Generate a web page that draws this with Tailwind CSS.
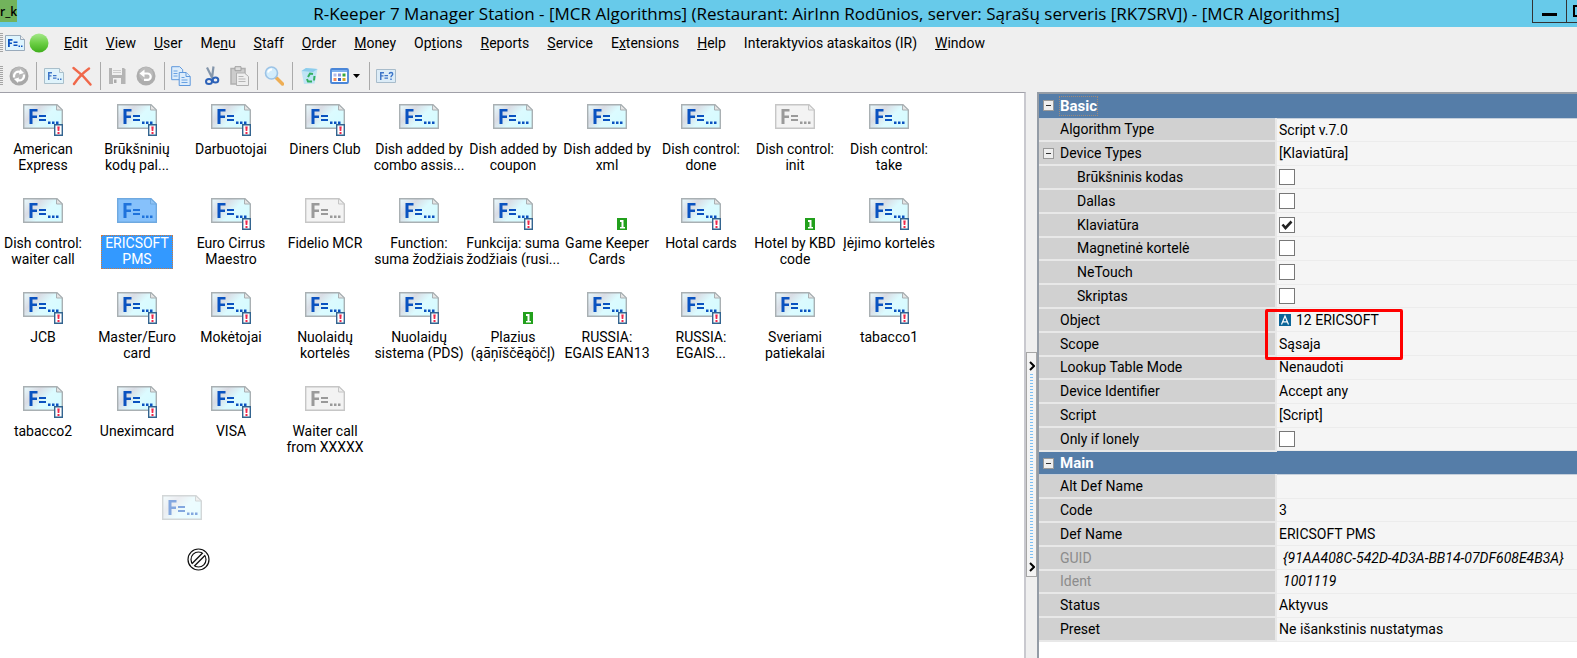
<!DOCTYPE html>
<html lang="en">
<head>
  <meta charset="UTF-8" />
  <meta name="viewport" content="width=device-width, initial-scale=1.0" />
  <title>R-Keeper 7 Manager Station</title>
  <script src="https://cdn.jsdelivr.net/npm/@tailwindcss/browser@4"></script>
</head>
<body class="min-h-screen flex flex-col overflow-x-hidden bg-[#efefef] font-['Roboto',sans-serif] text-sm text-black">

  <!-- Shared symbols -->
  <svg class="absolute size-0">
    <defs>
      <linearGradient id="paper" x1="0" y1="0" x2="1" y2=".6">
        <stop offset="0" stop-color="#e8fbff" />
        <stop offset=".35" stop-color="#d9dce4" />
        <stop offset=".65" stop-color="#dcfbff" />
        <stop offset="1" stop-color="#d6fbff" />
      </linearGradient>
      <linearGradient id="ball" x1="0" y1="0" x2="0" y2="1">
        <stop offset="0" stop-color="#a5e88a" />
        <stop offset=".5" stop-color="#6ccf45" />
        <stop offset="1" stop-color="#3fae1c" />
      </linearGradient>
    </defs>
    <symbol id="formula" viewBox="0 0 40 32">
      <path d="M6.500 5h8v2.500H9.500v4h4.500V14H9.500v6h-3z" />
      <path d="M16 11h7v2h-7zM16 15h7v2h-7zM25 17.500h2.500V20H25zM29 17.500h2.500V20H29zM33 17.500h2.500V20H33z" />
    </symbol>
    <symbol id="doc" viewBox="0 0 40 32">
      <path d="M.7.7H34l5.3 5.3V24.300H.7z" fill="url(#paper)" stroke="#a9b0b3" stroke-width="1.400" />
      <path d="M33.500 .7V6h5.800z" fill="#e4e4e4" stroke="#a9b0b3" />
      <use href="#formula" width="40" height="32" fill="#0a52c0" />
    </symbol>
    <symbol id="doc-gray" viewBox="0 0 40 32">
      <path d="M.7.7H34l5.3 5.3V24.300H.7z" fill="#f3f3f3" stroke="#c6c6c6" stroke-width="1.400" />
      <path d="M33.500 .7V6h5.800z" fill="#eee" stroke="#c6c6c6" />
      <use href="#formula" width="40" height="32" fill="#9a9a9a" />
    </symbol>
    <symbol id="doc-selected" viewBox="0 0 40 32">
      <path d="M.7.7H34l5.3 5.3V24.300H.7z" fill="#86c1fb" stroke="#6fa9e0" stroke-width="1.400" />
      <path d="M33.500 .7V6h5.800z" fill="#8fc3f5" stroke="#6fa9e0" />
      <use href="#formula" width="40" height="32" fill="#1f73dc" />
    </symbol>
    <symbol id="mark" viewBox="0 0 40 32">
      <path d="M31.700 20.700h7.600v10.600h-7.600z" fill="#fff" stroke="#33648f" stroke-width="1.400" />
      <path d="M34.300 22.500h2.400l-.4 4.500h-1.600zM34.500 28h2v2h-2z" fill="#f0284a" />
    </symbol>
    <symbol id="one" viewBox="0 0 40 32">
      <path d="M30 20h10v12H30z" fill="#22a01c" />
      <path d="M33 22h3.500v7H38v1.500h-5V29h1.500v-5H33z" fill="#fff" />
    </symbol>
  </svg>

  <!-- Title bar -->
  <header class="relative flex h-[27px] shrink-0 justify-center bg-[#67caea] pl-[76px]">
    <span class="absolute left-0 top-0 h-[22px] w-[17px] bg-[#72b35c] font-['Open_Sans',sans-serif] text-xs font-semibold leading-6">r_k</span>
    <h1 class="whitespace-nowrap font-['Open_Sans',sans-serif] text-[17px] leading-7">R-Keeper 7 Manager Station - [MCR Algorithms] (Restaurant: AirInn Rodūnios, server: Sąrašų serveris [RK7SRV]) - [MCR Algorithms]</h1>
    <div class="absolute right-0 top-0 flex">
      <button aria-label="Minimize" class="flex h-[23px] w-[35px] items-end justify-center border-x border-b border-[#333] pb-[6px]"><span class="h-[3px] w-[15px] bg-black"></span></button>
      <button aria-label="Restore" class="flex h-[23px] w-[10px] items-center justify-end border-b border-[#333]"><span class="h-3 w-1 border-y-2 border-l-2 border-black"></span></button>
    </div>
  </header>

  <!-- Menu -->
  <nav class="flex h-8 shrink-0 items-center">
    <span class="h-5 w-[3px] bg-[repeating-linear-gradient(#a5a5a5_0_1px,#efefef_1px_2px)]"></span>
    <svg class="ml-[2px] h-4 w-5" viewBox="0 0 20 16"><path d="M.5.5h15l4 4v11H.5z" fill="#def4fd" stroke="#9ab" /><path d="M15.500 .5v4h4" fill="#eee" stroke="#9ab" /><path d="M3 4h4.500v1.800H4.800v1.700H7v1.500H4.800V12H3zM8.500 6.500h4V8h-4zM8.500 9.500h4V11h-4zM13.500 10.500H15V12h-1.500zM16 10.500h1.500V12H16z" fill="#0a52c0" /></svg>
    <svg class="ml-1 size-5" viewBox="0 0 20 20"><circle cx="10" cy="10" r="9.500" fill="url(#ball)" /></svg>
    <ul id="menu" class="ml-[15px] flex gap-[18px] whitespace-nowrap"></ul>
  </nav>

  <!-- Toolbar -->
  <div class="flex h-[33px] shrink-0 items-center">
    <span class="h-5 w-[3px] bg-[repeating-linear-gradient(#a5a5a5_0_1px,#efefef_1px_2px)]"></span>
    <button aria-label="Refresh" class="ml-[6px]">
      <svg class="size-5" viewBox="0 0 20 20"><circle cx="10" cy="10" r="9.500" fill="#a8a8a8" /><circle cx="10" cy="8" r="7" fill="#b8b8b8" /><path d="M5 11.500C4.500 7 8 4.500 11.500 6M15 8.500c.5 4.500-3 7-6.500 5.500" fill="none" stroke="#fff" stroke-width="2.200" /><path d="M11 3l4 4-5 1.500zM9 17l-4-4 5-1.500z" fill="#fff" /></svg>
    </button>
    <span class="ml-[7px] h-7 w-px bg-[#aaa]"></span>
    <button aria-label="New" class="ml-[7px]">
      <svg class="h-4 w-5" viewBox="0 0 20 16"><path d="M.5.5h15l4 4v11H.5z" fill="#dff3fb" stroke="#a9bfcb" /><path d="M15.500 .5v4h4" fill="#eee" stroke="#a9bfcb" /><path d="M4 4h4v1.500H5.500v1.700H7.500v1.300H5.500V12H4zM9 7h3.500v1.200H9zM9 9.500h3.500v1.200H9zM13.500 10.500H15V12h-1.500zM16 10.500h1.500V12H16z" fill="#3c74c8" /></svg>
    </button>
    <button aria-label="Delete" class="ml-2">
      <svg class="size-5" viewBox="0 0 20 20"><path d="M1.500 2Q11 9 18.500 18.500M17 2.500Q8 9 2 18" fill="none" stroke="#f0684a" stroke-width="2.400" stroke-linecap="round" /></svg>
    </button>
    <span class="ml-2 h-7 w-px bg-[#aaa]"></span>
    <button aria-label="Save" class="ml-[7px]">
      <svg class="size-[18px]" viewBox="0 0 18 18"><path d="M1 1h15l1.500 1.500V17H1z" fill="#b4b4b4" /><path d="M4 1h10v7H4zM5 11h8v6H5z" fill="#f0f0f0" /><path d="M6 12.500h2.500V16H6z" fill="#aaa" /><path d="M5 3.500h8M5 5.500h8" stroke="#ccc" /></svg>
    </button>
    <button aria-label="Undo" class="ml-[10px]">
      <svg class="size-5" viewBox="0 0 20 20"><circle cx="10" cy="10" r="9.500" fill="#adadad" /><circle cx="10" cy="8" r="7" fill="#bbb" /><path d="M7 7.500h4.500a3.200 3.200 0 0 1 0 6.400H8" fill="none" stroke="#fff" stroke-width="2.200" /><path d="M8.500 3.500v8l-5-4z" fill="#fff" /></svg>
    </button>
    <span class="ml-2 h-7 w-px bg-[#aaa]"></span>
    <button aria-label="Copy" class="ml-[6px]">
      <svg class="size-5" viewBox="0 0 20 20"><g fill="#dcecfb" stroke="#5f98dc"><path d="M.7.7h8l3 3v10H.7z" /><path d="M8.200 6.500h7l4 4v9h-11z" /><path d="M15 6.500v4h4" /></g><path d="M2.500 5h4M2.500 7.500h4M2.500 10h4M10.500 11.500h3M10.500 14h6M10.500 16.500h6" stroke="#6aa2e2" /></svg>
    </button>
    <button aria-label="Cut" class="ml-3">
      <svg class="size-5" viewBox="0 0 20 20"><path d="M4 1.500l5.500 11M10.500 .5L9 12" stroke="#8496ab" stroke-width="2.200" /><g fill="none" stroke="#2d62b8" stroke-width="2"><ellipse cx="6" cy="15.500" rx="3" ry="2.600" /><ellipse cx="12.500" cy="14" rx="2.800" ry="2.600" /></g></svg>
    </button>
    <button aria-label="Paste" class="ml-[7px]">
      <svg class="size-5" viewBox="0 0 20 20"><path d="M1 2.500h14V18H1z" fill="#ccc" stroke="#b0b0b0" stroke-width="1.500" /><path d="M5 .7h6v4H5z" fill="#ddd" stroke="#a0a0a0" /><path d="M6.500 7h8l4 3.500v9h-12z" fill="#eee" stroke="#b0b0b0" /><path d="M8.500 10.500h5M8.500 13h7M8.500 15.500h7" stroke="#b5b5b5" /></svg>
    </button>
    <span class="ml-[7px] h-7 w-px bg-[#aaa]"></span>
    <button aria-label="Find" class="ml-[6px]">
      <svg class="size-5" viewBox="0 0 20 20"><path d="M12.500 12l6 6" stroke="#eeae55" stroke-width="3.500" stroke-linecap="round" /><circle cx="7.500" cy="7" r="6" fill="#d3edfc" stroke="#9cc3e6" stroke-width="1.600" /><path d="M4 6.500a4 4 0 0 1 4-3" fill="none" stroke="#fff" stroke-width="1.800" /></svg>
    </button>
    <span class="ml-2 h-7 w-px bg-[#aaa]"></span>
    <button aria-label="Recycle bin" class="ml-2">
      <svg class="h-[18px] w-5" viewBox="0 0 20 18"><path d="M.5 4L5 1l11.500 1L13.500 16.500 3 17z" fill="#bfe4f5" /><path d="M.5 4L5 1l11.500 1-4.500 3z" fill="#8dcdec" /><g fill="none" stroke="#33b061" stroke-width="2"><path d="M7 10l2-3.500 3 .5M13.500 9l-.5 4.500M11 14.500H7l-1-2.500" /></g></svg>
    </button>
    <button aria-label="View mode" class="ml-[9px] flex items-center gap-1">
      <svg class="h-4 w-[19px]" viewBox="0 0 19 16"><rect x="1" y="1" width="17" height="14" rx="1" fill="#fff" stroke="#4a86d8" stroke-width="1.800" /><path d="M2 2h15v2H2z" fill="#7fb0ee" /><path d="M3.500 5.500h3v3h-3z" fill="#b6bbe8" /><path d="M8 5.500h3v3H8z" fill="#8c97dd" /><path d="M12.500 5.500h3v3h-3z" fill="#3aa83c" /><path d="M3.500 10h3v3h-3z" fill="#f0885c" /><path d="M8 10h3v3H8z" fill="#3565c8" /><path d="M12.500 10h3v3h-3z" fill="#d7a52c" /></svg>
      <svg class="h-1 w-[7px]" viewBox="0 0 7 4"><path d="M0 0h7L3.500 4z" /></svg>
    </button>
    <span class="ml-[9px] h-7 w-px bg-[#aaa]"></span>
    <button aria-label="Formula help" class="ml-[6px]">
      <svg class="h-[14px] w-5" viewBox="0 0 20 14"><path d="M.5.5h19v13H.5z" fill="#dcecf7" stroke="#a8bccb" /><path d="M4 3h4v1.500H5.500v1.700h2v1.300h-2V11H4zM8.500 6H12v1.200H8.500zM8.500 8.500H12v1.200H8.500z" fill="#3c74c8" /><path d="M13.300 5c0-2 3.400-2 3.400 0 0 1.500-1.700 1.500-1.700 3.200M15 9.500V11" fill="none" stroke="#3c74c8" stroke-width="1.400" /></svg>
    </button>
  </div>

  <div class="flex grow">
    <!-- Algorithms list -->
    <main class="relative grow border-r-2 border-t border-r-[#c9c9cf] border-t-[#a0a0a8] bg-white">
      <div id="items" class="-ml-1 grid auto-rows-[94px] grid-cols-[repeat(10,94px)] pt-[11px]"></div>
      <!-- Dragged item and no-drop cursor -->
      <svg class="absolute left-[162px] top-[402px] h-8 w-10 opacity-50"><use href="#doc" /></svg>
      <svg class="absolute left-[187px] top-[455px] size-[23px]" viewBox="0 0 23 23"><g fill="none"><circle cx="11.500" cy="11.500" r="9" stroke="#111" stroke-width="4.200" /><path d="M5.500 17.500l12-12" stroke="#111" stroke-width="4.600" /><circle cx="11.500" cy="11.500" r="9" stroke="#fff" stroke-width="1.800" /><path d="M5.500 17.500l12-12" stroke="#fff" stroke-width="2" /></g></svg>
    </main>

    <!-- Splitter -->
    <div class="w-[11px] shrink-0 pt-[260px]">
      <button aria-label="Collapse panel" class="flex h-[225px] w-full flex-col items-center border border-[#a6a6a6] bg-[#f4f4f4] pb-1 pt-2">
        <svg class="h-[10px] w-[6px]" viewBox="0 0 6 10"><path d="M1 1l4 4-4 4" fill="none" stroke="#000" stroke-width="2" /></svg>
        <span class="my-[3px] w-[3px] grow bg-[repeating-linear-gradient(#7cc0f5_0_1px,#f4f4f4_1px_3px)]"></span>
        <svg class="h-[10px] w-[6px]" viewBox="0 0 6 10"><path d="M1 1l4 4-4 4" fill="none" stroke="#000" stroke-width="2" /></svg>
      </button>
    </div>

    <!-- Properties -->
    <aside class="relative w-[540px] shrink-0 border-l-2 border-t-2 border-[#949ca6] bg-white">
      <table class="h-[548px] w-full border-collapse text-left leading-5">
        <tbody id="props"></tbody>
      </table>
      <div class="pointer-events-none absolute left-[226px] top-[215px] h-[51px] w-[138px] rounded-[2px] border-3 border-[#f00]"></div>
    </aside>
  </div>

  <script>
    const menu = ['_Edit', '_View', '_User', 'Me_nu', '_Staff', '_Order', '_Money', 'Op_tions', '_Reports', '_Service', 'E_xtensions', '_Help', 'Interaktyvios ataskaitos (IR)', '_Window'];
    document.getElementById('menu').innerHTML = menu.map(m => `<li><a href="#">${m.replace(/_(.)/, '<u>$1</u>')}</a></li>`).join('');

    // [caption, icon, overlay]
    const items = [
      ['American<br>Express', 'doc', 'mark'],
      ['Brūkšninių<br>kodų pal...', 'doc', 'mark'],
      ['Darbuotojai', 'doc', 'mark'],
      ['Diners Club', 'doc', 'mark'],
      ['Dish added by<br>combo assis...', 'doc'],
      ['Dish added by<br>coupon', 'doc'],
      ['Dish added by<br>xml', 'doc'],
      ['Dish control:<br>done', 'doc'],
      ['Dish control:<br>init', 'doc-gray'],
      ['Dish control:<br>take', 'doc'],
      ['Dish control:<br>waiter call', 'doc'],
      ['ERICSOFT<br>PMS', 'doc-selected'],
      ['Euro Cirrus<br>Maestro', 'doc', 'mark'],
      ['Fidelio MCR', 'doc-gray'],
      ['Function:<br>suma žodžiais', 'doc'],
      ['Funkcija: suma<br>žodžiais (rusi...', 'doc', 'mark'],
      ['Game Keeper<br>Cards', '', 'one'],
      ['Hotal cards', 'doc', 'mark'],
      ['Hotel by KBD<br>code', '', 'one'],
      ['Įėjimo kortelės', 'doc', 'mark'],
      ['JCB', 'doc', 'mark'],
      ['Master/Euro<br>card', 'doc', 'mark'],
      ['Mokėtojai', 'doc', 'mark'],
      ['Nuolaidų<br>kortelės', 'doc', 'mark'],
      ['Nuolaidų<br>sistema (PDS)', 'doc', 'mark'],
      ['Plazius<br>(ąāņīščēąöčļ)', '', 'one'],
      ['RUSSIA:<br>EGAIS EAN13', 'doc', 'mark'],
      ['RUSSIA:<br>EGAIS...', 'doc', 'mark'],
      ['Sveriami<br>patiekalai', 'doc'],
      ['tabacco1', 'doc', 'mark'],
      ['tabacco2', 'doc', 'mark'],
      ['Uneximcard', 'doc', 'mark'],
      ['VISA', 'doc', 'mark'],
      ['Waiter call<br>from XXXXX', 'doc-gray']
    ];

    document.getElementById('items').innerHTML = items.map(([text, icon, overlay]) => {
      const selected = icon === 'doc-selected'
        ? 'bg-[#3399ff] text-white px-1 pb-[2px] outline-1 outline-dotted outline-[#d07a3c] -outline-offset-1'
        : '';
      return `
        <div class="flex flex-col items-center gap-[5px]">
          <svg class="h-8 w-10">${icon ? `<use href="#${icon}" />` : ''}${overlay ? `<use href="#${overlay}" />` : ''}</svg>
          <span class="whitespace-nowrap text-center leading-4 ${selected}">${text}</span>
        </div>`;
    }).join('');

    const minus = `<button aria-label="Collapse" class="flex size-[11px] shrink-0 items-center justify-center border border-[#999] bg-[#eee]"><span class="h-px w-[5px] bg-[#333]"></span></button>`;
    const header = (text, focused) => `
      <tr class="bg-[#557da8] text-white">
        <th colspan="2" class="h-6 border-b border-[#c5cfdb] p-0 pl-1 text-[15px] font-bold">
          <div class="flex items-center gap-[5px]">${minus}<span class="leading-5 px-px ${focused ? 'outline-1 outline-dotted outline-[#a08a78] -outline-offset-1' : ''}">${text}</span></div>
        </th>
      </tr>`;
    const check = (id, checked) => `
      <span class="relative flex size-4">
        <input type="checkbox" id="${id}" ${checked ? 'checked' : ''} class="size-4 appearance-none border border-[#777] bg-white" />
        ${checked ? '<svg class="pointer-events-none absolute inset-0 size-4" viewBox="0 0 16 16"><path d="M3.500 7.500L6.500 11 12.500 4.500" fill="none" stroke="#222" stroke-width="2.600" /></svg>' : ''}
      </span>`;

    // [label, value, options]
    const props = [
      ['Basic'],
      ['Algorithm Type', 'Script v.7.0'],
      ['Device Types', '[Klaviatūra]', 'open'],
      ['Brūkšninis kodas', false, 'sub'],
      ['Dallas', false, 'sub'],
      ['Klaviatūra', true, 'sub'],
      ['Magnetinė kortelė', false, 'sub'],
      ['NeTouch', false, 'sub'],
      ['Skriptas', false, 'sub'],
      ['Object', '<span class="flex items-center gap-[5px]"><svg class="size-3" viewBox="0 0 12 12"><path d="M0 0h12v12H0z" fill="#0b6598" /><path d="M2.500 10.500L6 2l3.500 8.500M3.500 7.800h5" fill="none" stroke="#fff" stroke-width="1.200" /></svg>12 ERICSOFT</span>'],
      ['Scope', 'Sąsaja'],
      ['Lookup Table Mode', 'Nenaudoti'],
      ['Device Identifier', 'Accept any'],
      ['Script', '[Script]'],
      ['Only if lonely', false],
      ['Main'],
      ['Alt Def Name', ''],
      ['Code', '3'],
      ['Def Name', 'ERICSOFT PMS'],
      ['GUID', '{91AA408C-542D-4D3A-BB14-07DF608E4B3A}', 'readonly'],
      ['Ident', '1001119', 'readonly'],
      ['Status', 'Aktyvus'],
      ['Preset', 'Ne išankstinis nustatymas']
    ];

    document.getElementById('props').innerHTML = props.map(([label, value, opt], i) => {
      if (value === undefined) return header(label, i === 0);
      const isCheck = typeof value === 'boolean';
      const name = isCheck ? `<label for="prop${i}">${label}</label>` : label;
      const pad = opt === 'sub' ? 'pl-[38px]' : opt === 'open' ? 'pl-1' : 'pl-[21px]';
      return `
        <tr>
          <th class="w-[237px] border-b-2 border-r-2 border-[#e8e8e8] bg-[#d1d1d1] p-0 font-normal ${pad} ${opt === 'readonly' ? 'text-[#8c8c8c]' : ''}">
            ${opt === 'open' ? `<div class="flex items-center gap-[6px]">${minus}${name}</div>` : name}
          </th>
          <td class="border-b border-[#ececec] bg-[#f5f5f5] p-0 ${opt === 'readonly' ? 'pl-[6px] italic' : 'pl-[2px]'}">${isCheck ? check('prop' + i, value) : value}</td>
        </tr>`;
    }).join('');
  </script>
</body>
</html>
